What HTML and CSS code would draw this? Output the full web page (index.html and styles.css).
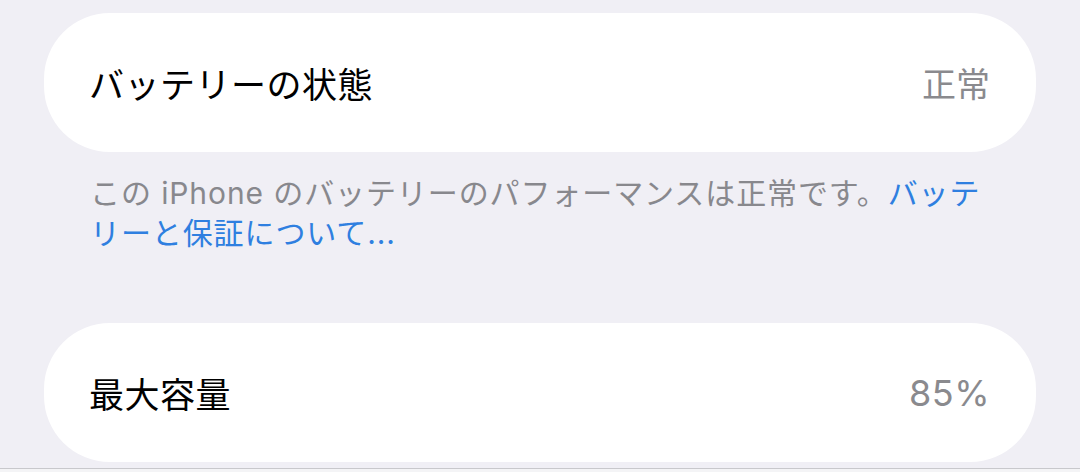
FILE: index.html
```html
<!DOCTYPE html>
<html lang="ja">
<head>
    <meta charset="UTF-8">
    <meta name="viewport" content="width=device-width, initial-scale=1.0">
    <title>バッテリーの状態</title>
    <link rel="stylesheet" href="styles.css">
</head>
<body>
    <div class="settings">
        <div class="group">
            <div class="row">
                <span class="row-label">バッテリーの状態</span>
                <span class="row-value">正常</span>
            </div>
        </div>
        <p class="group-footer">この iPhone のバッテリーのパフォーマンスは正常です。<a href="#" class="footer-link">バッテリーと保証について...</a></p>

        <div class="group group-second">
            <div class="row">
                <span class="row-label">最大容量</span>
                <span class="row-value row-value-number">85%</span>
            </div>
        </div>
    </div>
    <div class="bottom-edge"></div>
</body>
</html>
```

FILE: styles.css
```css
/* General */
body {
    margin: 0;
    padding: 0;
    height: 472px;
    overflow: hidden;
    background: #f0eff5;
    font-family: "Inter", "Noto Sans CJK JP", sans-serif;
    color: #000;
    display: flex;
    flex-direction: column;
}

.settings {
    flex: 1;
    padding-top: 13px;
}

/* Grouped rows */
.group {
    margin: 0 44px;
    background: #fff;
    border-radius: 66px;
}

.group-second {
    margin-top: 70px;
}

.row {
    height: 139px;
    padding: 0 46px 0 45px;
    display: flex;
    align-items: center;
    justify-content: space-between;
}

.row-label {
    font-size: 35px;
    letter-spacing: 0.5px;
}

.row-value {
    font-size: 34px;
    color: #8a8a8e;
}

.row-value-number {
    font-size: 36px;
    letter-spacing: 0.5px;
}

/* Footer note */
.group-footer {
    margin: 21px 0 0 0;
    padding: 0 90px 0 90px;
    font-size: 30px;
    line-height: 40px;
    letter-spacing: 0.9px;
    color: #88888d;
}

.footer-link {
    color: #2f7fe0;
    text-decoration: none;
}

.bottom-edge {
    height: 3px;
    border-top: 1px solid #c8c8cc;
    background: #f4f4f6;
}
```
